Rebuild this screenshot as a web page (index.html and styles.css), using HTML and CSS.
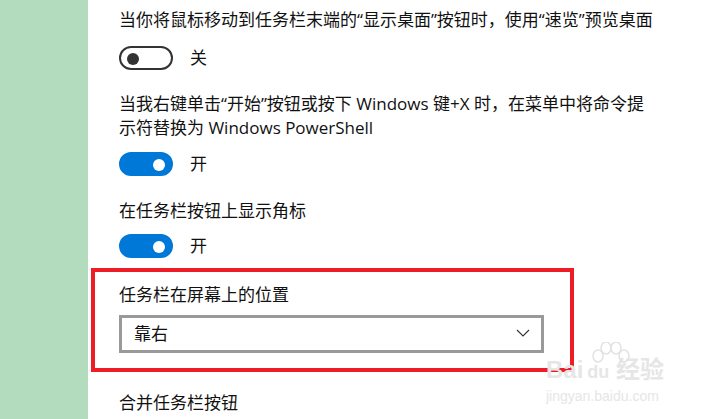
FILE: index.html
```html
<!DOCTYPE html>
<html lang="zh-CN">

<head>
   <meta charset="UTF-8">
   <meta name="viewport" content="width=device-width, initial-scale=1.0">
   <title>任务栏设置</title>
   <link rel="stylesheet" href="styles.css">
</head>

<body>
   <aside class="lateral"></aside>

   <main class="conteudo">
      <p class="texto primeiro">当你将鼠标移动到任务栏末端的“显示桌面”按钮时，使用“速览”预览桌面</p>
      <div class="linha-toggle">
         <span class="toggle"></span>
         <span class="estado">关</span>
      </div>

      <p class="texto">当我右键单击“开始”按钮或按下 Windows 键+X 时，在菜单中将命令提<br>示符替换为 Windows PowerShell</p>
      <div class="linha-toggle">
         <span class="toggle ligado"></span>
         <span class="estado">开</span>
      </div>

      <p class="texto">在任务栏按钮上显示角标</p>
      <div class="linha-toggle curta">
         <span class="toggle ligado"></span>
         <span class="estado">开</span>
      </div>

      <section class="destaque">
         <p class="texto rotulo">任务栏在屏幕上的位置</p>
         <div class="seletor">
            <span>靠右</span>
            <svg class="seta" width="14" height="8" viewBox="0 0 14 8">
               <path d="M1 1 L7 7 L13 1" fill="none" stroke="#333" stroke-width="1.1"/>
            </svg>
         </div>
      </section>

      <p class="texto ultimo">合并任务栏按钮</p>
   </main>

   <!-- marca d'agua -->
   <div class="marca">
      <svg class="pata" width="40" height="30" viewBox="0 0 40 30">
         <ellipse cx="8" cy="14" rx="5" ry="6" fill="none" stroke="#e2e2e2" stroke-width="1.5"/>
         <ellipse cx="16" cy="6" rx="5" ry="6" fill="none" stroke="#e2e2e2" stroke-width="1.5"/>
         <ellipse cx="26" cy="6" rx="5" ry="6" fill="none" stroke="#e2e2e2" stroke-width="1.5"/>
         <ellipse cx="34" cy="14" rx="5" ry="6" fill="none" stroke="#e2e2e2" stroke-width="1.5"/>
      </svg>
      <div class="marca-nome">Bai<span class="du">du</span> 经验</div>
      <div class="marca-site">jingyan.baidu.com</div>
   </div>
</body>

</html>
```
FILE: styles.css
```css
html,
body {
   margin: 0;
   padding: 0;
   height: 100%;
   overflow: hidden;
   background: #fff;
   font-family: 'Open Sans', 'Noto Sans CJK SC', sans-serif;
   font-size: 17px;
   line-height: 24px;
   color: #111;
}

body {
   display: flex;
   position: relative;
}

.lateral {
   width: 88px;
   flex-shrink: 0;
   background-color: #b3dcbf;
}

.conteudo {
   padding-left: 31px;
   flex: 1;
}

.texto {
   margin: 0;
   white-space: nowrap;
}

.primeiro {
   margin-top: 8px;
}

.linha-toggle {
   display: flex;
   align-items: center;
   height: 24px;
   margin: 14px 0 22px;
}

.linha-toggle.curta {
   margin: 11px 0 10px;
}

.toggle {
   box-sizing: border-box;
   width: 54px;
   height: 24px;
   border: 2.5px solid #333;
   border-radius: 12px;
   position: relative;
   margin-right: 17px;
}

.toggle::after {
   content: '';
   position: absolute;
   left: 6px;
   top: 4.5px;
   width: 12px;
   height: 12px;
   border-radius: 50%;
   background: #333;
}

.toggle.ligado {
   background: #0078d7;
   border-color: #0078d7;
}

.toggle.ligado::after {
   left: auto;
   right: 6px;
   background: #fff;
}

.linha-toggle:nth-of-type(2) {
   margin: 12px 0 23px;
}

.destaque {
   box-sizing: border-box;
   width: 483px;
   margin-left: -28px;
   border: 4px solid #ee1c25;
   padding: 11px 24px 15px;
}

.rotulo {
   margin-bottom: 8px;
}

.seletor {
   box-sizing: border-box;
   width: 425px;
   height: 38px;
   border: 3px solid #999;
   display: flex;
   align-items: center;
   justify-content: space-between;
   padding: 0 11px 0 12px;
}

.seta {
   margin-top: -2px;
}

.ultimo {
   margin-top: 19px;
}

.marca {
   position: absolute;
   left: 546px;
   top: 340px;
   color: #e6e6e6;
   font-family: 'Liberation Sans', 'Noto Sans CJK SC', sans-serif;
}

.pata {
   position: absolute;
   left: 44px;
   top: 2px;
}

.marca-nome {
   font-size: 24px;
   line-height: 24px;
   margin-top: 18px;
   font-weight: bold;
}

.du {
   font-size: 18px;
   margin-left: 4px;
}

.marca-site {
   font-size: 14px;
   line-height: 16px;
   margin-top: 4px;
}
```
